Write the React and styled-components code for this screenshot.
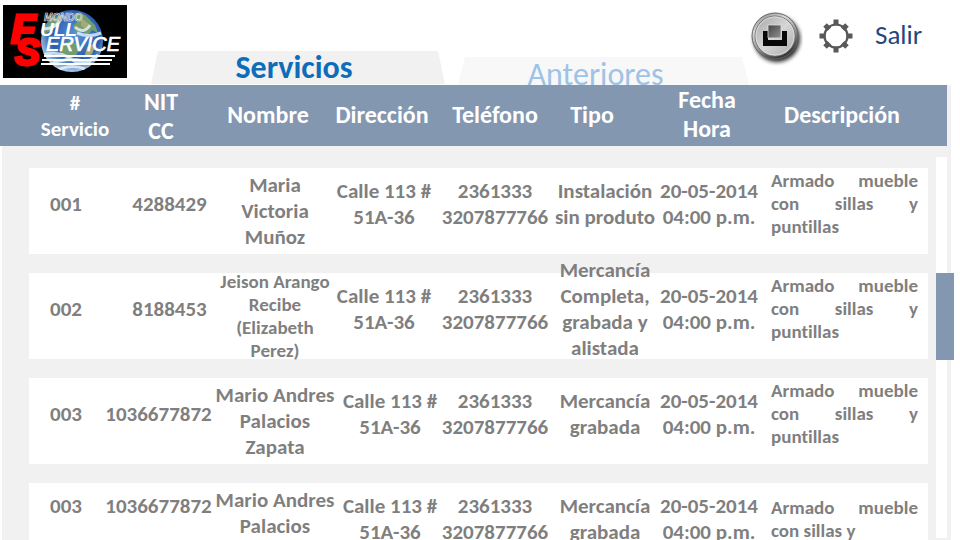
import React from "react";
import styled, { createGlobalStyle } from "styled-components";

const SLATE = "#8497b0";

const GlobalStyle = createGlobalStyle`
  *, *::before, *::after { box-sizing: border-box; }
  body {
    margin: 0;
    background: #fff;
    font-family: Carlito, Lato, "Open Sans", sans-serif;
    font-variant-ligatures: none;
    overflow: hidden;
  }
`;

const Page = styled.main`
  display: flex;
  flex-direction: column;
  height: 100vh;
  overflow: hidden;
`;

const TopBar = styled.header`
  display: grid;
  grid-template-columns: minmax(0, 151fr) minmax(0, 294fr) 13px minmax(0, 291fr) minmax(0, 211fr);
  height: 85px;
  flex: none;
`;

const LogoLink = styled.a`
  display: block;
  padding: 5px 0 0 3px;
  svg { display: block; }
`;

const Tab = styled.button`
  grid-column: ${(p) => (p.$active ? 2 : 4)};
  align-self: end;
  height: ${(p) => (p.$active ? "33px" : "28px")};
  margin: 0 0 ${(p) => (p.$active ? "1px" : "0")};
  padding: 0 ${(p) => (p.$active ? "8px" : "16px")} 0 0;
  border: 0;
  background: ${(p) => (p.$active ? "#f1f1f1" : "#f8f8f8")};
  color: ${(p) => (p.$active ? "#0f6cb9" : "#9dc3e6")};
  font-family: inherit;
  font-size: 32px;
  font-weight: ${(p) => (p.$active ? 700 : 400)};
  line-height: ${(p) => (p.$active ? "33px" : "36px")};
  clip-path: polygon(7px 0, calc(100% - 7px) 0, 100% 100%, 0 100%);
  cursor: pointer;
`;

const Actions = styled.nav`
  grid-column: 5;
  display: flex;
  align-items: flex-start;
  gap: 16px;
  padding-top: 8px;
`;

const IconButton = styled.button`
  display: block;
  height: 56px;
  padding: 0;
  border: 0;
  background: none;
  cursor: pointer;
  svg { display: block; }
`;

const ExitLink = styled.a`
  margin-left: 6px;
  color: #1f497d;
  font-size: 27px;
  line-height: 54px;
  text-decoration: none;
`;

const Panel = styled.section`
  flex: 1;
  min-height: 0;
  display: grid;
  grid-template-columns: minmax(0, 1fr) 11px;
  grid-template-rows: auto minmax(0, 1fr);
  margin: 0 9px 0 2px;
  padding-right: 4px;
  background: #f1f1f1;
`;

const Table = styled.table`
  display: contents;
`;

const Head = styled.thead`
  grid-column: 1 / -1;
  display: block;
  margin-left: -2px;
  background: ${SLATE};
`;

const HeadRow = styled.tr`
  display: grid;
  grid-template-columns:
    minmax(0, 82fr) minmax(0, 90fr) minmax(0, 124fr) minmax(0, 104fr)
    minmax(0, 122fr) minmax(0, 72fr) minmax(0, 158fr) minmax(0, 112fr);
  align-items: center;
  min-height: 61px;
  padding: 0 49px 0 34px;
`;

const HeadCell = styled.th`
  display: grid;
  justify-content: center;
  min-width: 0;
  padding: 0 0 ${(p) => (p.$raised ? "3px" : "0")};
  color: #fff;
  font-size: ${(p) => (p.$small ? "21px" : "24px")};
  line-height: ${(p) => (p.$small ? "26px" : "29px")};
  text-align: center;
  white-space: nowrap;
`;

const Body = styled.tbody`
  display: grid;
  align-content: start;
  gap: 19px;
  padding: 22px 8px 0 27px;
`;

const Row = styled.tr`
  display: grid;
  grid-template-columns:
    minmax(0, 74fr) minmax(0, 111fr) minmax(0, 122fr) minmax(0, 96fr)
    minmax(0, 126fr) minmax(0, 94fr) minmax(0, 114fr) minmax(0, 162fr);
  height: 86px;
  background: #fff;
`;

const Cell = styled.td`
  display: grid;
  align-content: center;
  justify-content: center;
  height: 86px;
  padding: 0 0 ${(p) => p.$lift ?? 14}px ${(p) => p.$indent ?? 0}px;
  color: #7f7f7f;
  font-size: ${(p) => (p.$small ? "19px" : "21px")};
  font-weight: 700;
  line-height: ${(p) => (p.$small ? "23px" : "26px")};
  text-align: center;
  white-space: nowrap;
`;

const Description = styled(Cell)`
  justify-content: stretch;
  padding: ${(p) => (p.$lower ? "8px 10px 0 5px" : "0 10px 16px 5px")};
  text-align: left;
`;

const Line = styled.span`
  display: block;
  text-align-last: ${(p) => (p.$spread ? "justify" : "auto")};
`;

const Track = styled.div`
  margin: 11px 0 2px;
  padding-top: 116px;
  background: #fff;
`;

const Thumb = styled.div`
  width: 18px;
  height: 87px;
  background: ${SLATE};
`;

const columns = [
  { lines: ["#", "Servicio"], small: true },
  { lines: ["NIT", "CC"] },
  { lines: ["Nombre"], raised: true },
  { lines: ["Dirección"], raised: true },
  { lines: ["Teléfono"], raised: true },
  { lines: ["Tipo"], raised: true },
  { lines: ["Fecha", "Hora"], raised: true },
  { lines: ["Descripción"], raised: true },
];

const rows = [
  {
    id: "001",
    nit: "4288429",
    nitIndent: 22,
    name: ["Maria", "Victoria", "Muñoz"],
    type: ["Instalación", "sin produto"],
  },
  {
    id: "002",
    nit: "8188453",
    nitIndent: 22,
    name: ["Jeison Arango", "Recibe", "(Elizabeth", "Perez)"],
    smallName: true,
    type: ["Mercancía", "Completa,", "grabada y", "alistada"],
  },
  {
    id: "003",
    nit: "1036677872",
    addressIndent: 12,
    name: ["Mario Andres", "Palacios", "Zapata"],
    type: ["Mercancía", "grabada"],
  },
  {
    id: "003",
    nit: "1036677872",
    addressIndent: 12,
    lift: 40,
    lower: true,
    name: ["Mario Andres", "Palacios", "Zapata"],
    type: ["Mercancía", "grabada"],
  },
];

const Lines = ({ items }) => items.map((text) => <Line key={text}>{text}</Line>);

function Logo() {
  return (
    <svg width="124" height="73" viewBox="0 0 124 73" role="img" aria-label="Mondo Full Service">
      <defs>
        <radialGradient id="ocean" cx="55%" cy="40%" r="62%">
          <stop offset="0" stopColor="#5795d8" />
          <stop offset="0.65" stopColor="#285cae" />
          <stop offset="1" stopColor="#b5d6ef" />
        </radialGradient>
        <clipPath id="globe"><ellipse cx="69" cy="36" rx="31" ry="31" /></clipPath>
      </defs>
      <rect width="124" height="73" fill="#000" />
      <ellipse cx="69" cy="36" rx="31" ry="31" fill="url(#ocean)" />
      <g clipPath="url(#globe)">
        <path d="M72 8l10 2 10 10 3 8-6-3-4 5-6-4-6 2-3-7 4-4zM48 14l12-5-3 8-9 9-8 3zM58 39l9-3 10 4-3 9-8 7-9-8z" fill="#739d6c" />
        <path d="M78 13l8 6-3 5-5-3zM84 42l10-5-5 12-8 4z" fill="#a5a87b" />
        <path d="M37 23q12 3 20-7M72 22q9 8 15-2M74 28q12 5 24 0M38 50q18-5 30 4t27-4M45 60q22-10 43-2M52 66q16-8 30-2" fill="none" stroke="#e9f4fc" strokeWidth="3" opacity="0.8" />
      </g>
      <g fontFamily="Liberation Sans, Arial, sans-serif" fontStyle="italic" fontWeight="700">
        <text x="41" y="16" fontSize="10" fill="none" stroke="#eee" strokeWidth="0.6">MONDO</text>
        <text x="37" y="31" fontSize="19" fill="#fff">ULL</text>
        <text x="43" y="46" fontSize="20" fontWeight="400" fill="#fff" stroke="#fff" strokeWidth="0.7">ERVICE</text>
        <text x="8" y="38" fontSize="40" fill="#f00" stroke="#f00" strokeWidth="3">F</text>
        <text x="12" y="60" fontSize="37" fill="#f00" stroke="#f00" strokeWidth="3">S</text>
      </g>
      <path d="M41 51H112M39 55H109M38 59H107" stroke="#fff" strokeWidth="2" />
    </svg>
  );
}

function TrayIcon() {
  return (
    <svg width="54" height="58" viewBox="0 0 54 58" aria-hidden="true">
      <defs>
        <linearGradient id="rim" x1="0" y1="0" x2="0.5" y2="1">
          <stop offset="0" stopColor="#777" />
          <stop offset="0.35" stopColor="#d9d9d9" />
          <stop offset="0.7" stopColor="#8e8e8e" />
          <stop offset="1" stopColor="#393939" />
        </linearGradient>
        <linearGradient id="face" x1="0" y1="0" x2="1" y2="1">
          <stop offset="0" stopColor="#a5a5a5" />
          <stop offset="0.5" stopColor="#d6d6d6" />
          <stop offset="1" stopColor="#a9a9a9" />
        </linearGradient>
        <linearGradient id="sheet" x1="0" y1="0" x2="1" y2="1">
          <stop offset="0" stopColor="#444" />
          <stop offset="1" stopColor="#929292" />
        </linearGradient>
        <filter id="soft" x="-20%" y="-20%" width="140%" height="140%">
          <feGaussianBlur stdDeviation="2" />
        </filter>
      </defs>
      <circle cx="28" cy="31" r="23" fill="#000" opacity="0.85" filter="url(#soft)" />
      <circle cx="26" cy="28" r="23" fill="url(#rim)" stroke="#666" />
      <circle cx="26" cy="28" r="20" fill="url(#face)" stroke="#777" />
      <circle cx="26" cy="28" r="19" fill="none" stroke="#ddd" />
      <path d="M14 23h5v9h14v-9h5v15H14z" fill="#080808" />
      <path d="M19 17h13v13H19z" fill="url(#sheet)" stroke="#ddd" strokeWidth="0.8" />
    </svg>
  );
}

function GearIcon() {
  return (
    <svg width="34" height="52" viewBox="0 0 34 52" aria-hidden="true">
      <g transform="translate(17 26)" fill="#595959">
        {[0, 45, 90, 135, 180, 225, 270, 315].map((angle) => (
          <rect key={angle} x="-2.5" y={angle % 90 ? -15.5 : -16.5} width="5" height="6" transform={`rotate(${angle})`} />
        ))}
        <circle r="11.5" fill="none" stroke="#595959" strokeWidth="2.2" />
      </g>
    </svg>
  );
}

export default function App() {
  return (
    <Page>
      <GlobalStyle />
      <TopBar>
        <LogoLink href="#inicio"><Logo /></LogoLink>
        <Tab type="button" $active>Servicios</Tab>
        <Tab type="button">Anteriores</Tab>
        <Actions>
          <IconButton type="button" aria-label="Bandeja"><TrayIcon /></IconButton>
          <IconButton type="button" aria-label="Configuración"><GearIcon /></IconButton>
          <ExitLink href="#salir">Salir</ExitLink>
        </Actions>
      </TopBar>
      <Panel>
        <Table>
          <Head>
            <HeadRow>
              {columns.map((c) => (
                <HeadCell key={c.lines[0]} scope="col" $small={c.small} $raised={c.raised}>
                  <Lines items={c.lines} />
                </HeadCell>
              ))}
            </HeadRow>
          </Head>
          <Body>
            {rows.map((r, i) => (
              <Row key={i}>
                <Cell $lift={r.lift}>{r.id}</Cell>
                <Cell $lift={r.lift} $indent={r.nitIndent}>{r.nit}</Cell>
                <Cell $lift={0} $small={r.smallName}><Lines items={r.name} /></Cell>
                <Cell $indent={r.addressIndent}><Lines items={["Calle 113 #", "51A-36"]} /></Cell>
                <Cell><Lines items={["2361333", "3207877766"]} /></Cell>
                <Cell><Lines items={r.type} /></Cell>
                <Cell><Lines items={["20-05-2014", "04:00 p.m."]} /></Cell>
                <Description $small $lower={r.lower}>
                  <Line $spread>Armado mueble</Line>
                  <Line $spread={!r.lower}>con sillas y</Line>
                  <Line>puntillas</Line>
                </Description>
              </Row>
            ))}
          </Body>
        </Table>
        <Track aria-hidden="true"><Thumb /></Track>
      </Panel>
    </Page>
  );
}
